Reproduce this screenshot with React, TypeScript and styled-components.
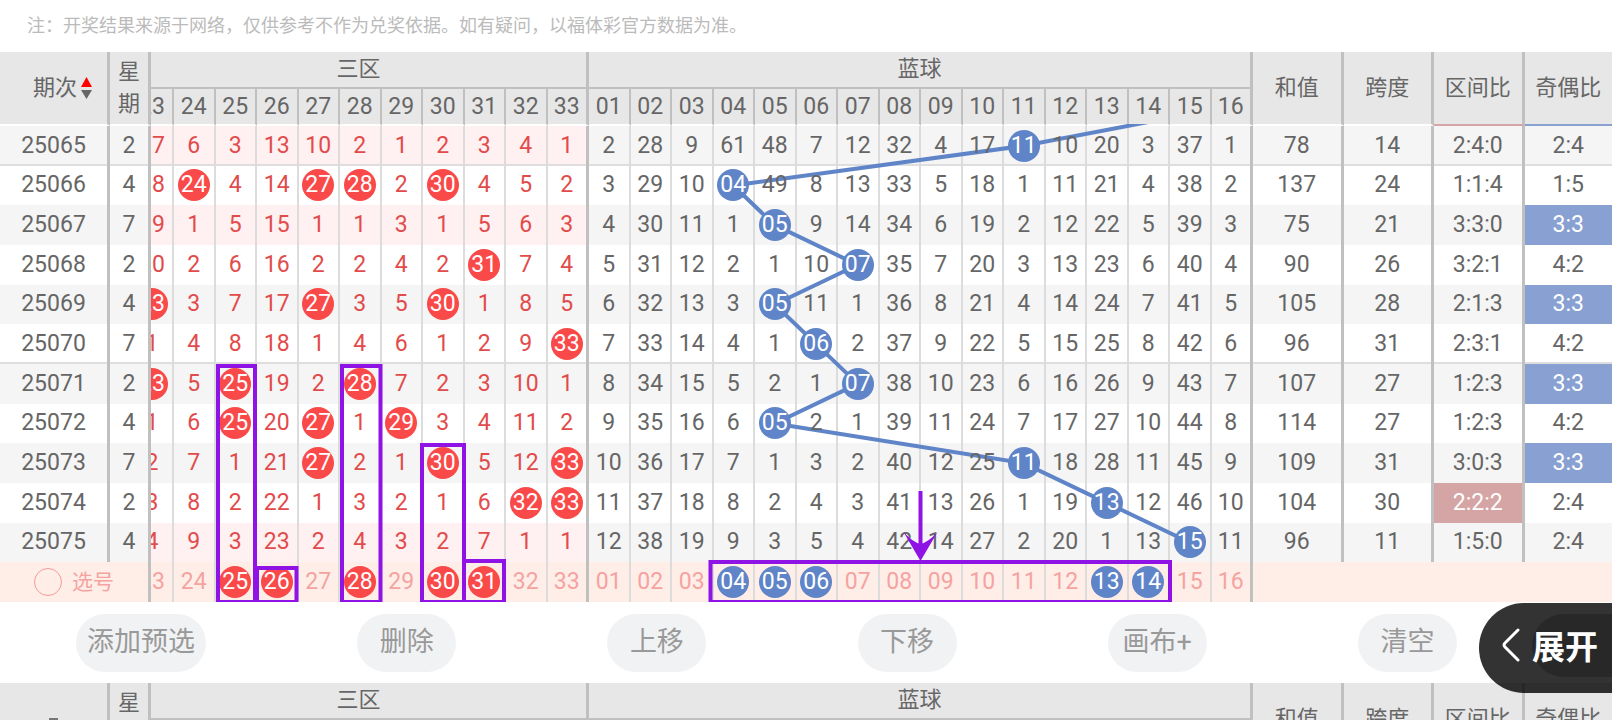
import React from 'react';
import styled, { createGlobalStyle, css } from 'styled-components';

const GlobalStyle = createGlobalStyle`
  * { box-sizing: border-box; }
  body {
    margin: 0;
    background: #fff;
    color: #666;
    font-family: Roboto, 'Noto Sans CJK SC', sans-serif;
  }
`;

/* Track widths shared by the table and the overlay drawing. */
const ISSUE = 220;
const WEEK = 82;
const CUT = 46;
const BALL = 83;
const STAT = 181;
const LAST = 175;
const RED_START = ISSUE + WEEK + CUT;
const BLUE_START = RED_START + BALL * 10;
const TOTAL = BLUE_START + BALL * 16 + STAT * 3 + LAST;
const BODY_HEIGHT = 476;
const STRIP = 2;

const tracks = css`
  display: grid;
  grid-template-columns:
    minmax(0, ${ISSUE}fr) minmax(0, ${WEEK}fr) minmax(0, ${CUT}fr)
    repeat(26, minmax(0, ${BALL}fr))
    repeat(3, minmax(0, ${STAT}fr)) minmax(0, ${LAST}fr);
`;

type Edge = 'thick' | 'thin' | 'none';
type Tone = 'plain' | 'grey' | 'pink' | 'select' | 'blue' | 'red';

const tones: Record<Tone, string> = {
  plain: '#fff',
  grey: '#f5f5f5',
  pink: '#fff0f1',
  select: '#ffeee8',
  blue: '#89a0d2',
  red: '#d5a4a4',
};

const Page = styled.main`
  height: 100vh;
  overflow: hidden;
`;

const Note = styled.p`
  margin: 0;
  padding: 0 27px;
  height: 52px;
  line-height: 52px;
  font-size: 18px;
  color: #bbb;
`;

const Chart = styled.section`
  position: relative;
  isolation: isolate;
`;

const Table = styled.table`
  display: block;
  width: 100%;
`;

const Head = styled.thead`
  ${tracks}
  grid-template-rows: 37px 37px;
`;

const HeadRow = styled.tr`
  display: contents;
`;

interface HeadCellProps {
  $from: number;
  $cols?: number;
  $row?: string;
  $edge?: Edge;
  $under?: string;
  $cut?: boolean;
}

const HeadCell = styled.th<HeadCellProps>`
  display: flex;
  align-items: center;
  justify-content: ${p => (p.$cut ? 'flex-end' : 'center')};
  overflow: hidden;
  padding: 0;
  grid-column: ${p => p.$from} / span ${p => p.$cols ?? 1};
  grid-row: ${p => p.$row ?? '1 / span 2'};
  background: #e7e7e7;
  background-clip: padding-box;
  font-size: 22px;
  font-weight: 400;
  line-height: 32px;
  white-space: nowrap;
  border: 0 solid #c0c0c0;
  border-right-width: ${p => (p.$edge === 'none' ? 0 : p.$edge === 'thin' ? 2 : 3)}px;
  border-bottom: 2px solid ${p => p.$under ?? '#fff'};
`;

const GroupLabel = styled.span<{ $shift?: boolean }>`
  padding: 0 ${p => (p.$shift ? 20 : 0)}px 2px 0;
`;

const Stacked = styled.span`
  width: 22px;
  white-space: normal;
`;

const SortButton = styled.button`
  display: flex;
  align-items: center;
  gap: 4px;
  padding: 0 0 0 18px;
  border: 0;
  background: none;
  color: inherit;
  font: inherit;
`;

const Body = styled.tbody`
  display: grid;
  grid-auto-rows: 1fr;
  height: ${BODY_HEIGHT}px;
`;

const Row = styled.tr`
  ${tracks}
`;

const Cell = styled.td<{ $tone: Tone; $edge?: Edge; $ruled?: boolean; $red?: boolean; $cut?: boolean; $cols?: number }>`
  display: flex;
  align-items: center;
  justify-content: ${p => (p.$cut ? 'flex-end' : 'center')};
  overflow: hidden;
  padding: 0;
  grid-column: span ${p => p.$cols ?? 1};
  background: ${p => tones[p.$tone]};
  color: ${p =>
    p.$tone === 'select' ? '#f4a3a1' : p.$tone === 'blue' || p.$tone === 'red' ? '#fff' : p.$red ? '#e24b4b' : '#666'};
  border: 0 solid ${p => (p.$edge === 'thin' ? '#dcdcdc' : '#c0c0c0')};
  border-right-width: ${p => (p.$edge === 'none' ? 0 : p.$edge === 'thin' ? 2 : 3)}px;
  box-shadow: ${p => (p.$ruled ? 'inset 0 -2px #dedede' : 'none')};
`;

const Value = styled.span<{ $ball?: 'red' | 'blue'; $cut?: boolean }>`
  position: relative;
  z-index: 1;
  flex: none;
  min-width: 32px;
  height: 32px;
  margin-right: ${p => (p.$cut ? 4 : 0)}px;
  border-radius: 16px;
  font-size: 23px;
  line-height: 31px;
  text-align: center;
  white-space: nowrap;
  ${p => p.$ball && css`
    color: #fff;
    background: ${p.$ball === 'red' ? '#fa4949' : '#5f85c8'};
  `}
`;

const PickLabel = styled.label`
  display: flex;
  align-items: center;
  gap: 10px;
  font-size: 21px;
  line-height: 32px;
`;

const PickRadio = styled.input`
  appearance: none;
  width: 28px;
  height: 28px;
  margin: 0;
  border: 1px solid #f49a98;
  border-radius: 50%;
`;

const Overlay = styled.svg<{ $above?: boolean }>`
  position: absolute;
  left: 0;
  bottom: 0;
  width: 100%;
  height: ${BODY_HEIGHT + STRIP}px;
  z-index: ${p => (p.$above ? 2 : 0)};
  pointer-events: none;
`;

const Toolbar = styled.div`
  display: flex;
  align-items: center;
  justify-content: space-between;
  height: 81px;
  padding: 0 155px 0 76px;
  background: #fff;
`;

const Pill = styled.button<{ $wide?: boolean }>`
  flex: none;
  width: ${p => (p.$wide ? 130 : 99)}px;
  height: 58px;
  padding: 0 0 2px;
  border: 0;
  border-radius: 29px;
  background: #f1f2f4;
  color: #999;
  font-family: inherit;
  font-size: 27px;
  line-height: 40px;
  white-space: nowrap;
`;

const Expand = styled.button`
  position: absolute;
  top: 603px;
  right: 0;
  z-index: 3;
  display: flex;
  align-items: center;
  gap: 12px;
  width: 133px;
  height: 90px;
  padding: 0 0 6px 23px;
  border: 0;
  border-radius: 45px 0 0 45px;
  background: rgba(0, 0, 0, 0.8);
  color: #fff;
  font-family: inherit;
  font-size: 33px;
  font-weight: 700;
  white-space: nowrap;
  overflow: hidden;
`;

const Shade = styled.span`
  position: absolute;
  top: 11px;
  left: 53px;
  right: 0;
  height: 63px;
  border-radius: 32px 0 0 32px;
  background: rgba(0, 0, 0, 0.2);
`;

const Chevron = styled.svg`
  position: relative;
  flex: none;
`;

const ExpandText = styled.span`
  position: relative;
`;

const reds = Array.from({ length: 10 }, (_, i) => String(24 + i));
const blues = Array.from({ length: 16 }, (_, i) => String(i + 1).padStart(2, '0'));

interface Draw {
  issue: string;
  week: number;
  red: string;
  blue: string;
  stats: [string, string, string, string];
  pink?: boolean;
}

/* Values that start with "*" are drawn numbers. */
const draws: Draw[] = [
  { issue: '25065', week: 2, red: '17 6 3 13 10 2 1 2 3 4 1', blue: '2 28 9 61 48 7 12 32 4 17 *11 10 20 3 37 1', stats: ['78', '14', '2:4:0', '2:4'], pink: true },
  { issue: '25066', week: 4, red: '18 *24 4 14 *27 *28 2 *30 4 5 2', blue: '3 29 10 *04 49 8 13 33 5 18 1 11 21 4 38 2', stats: ['137', '24', '1:1:4', '1:5'] },
  { issue: '25067', week: 7, red: '19 1 5 15 1 1 3 1 5 6 3', blue: '4 30 11 1 *05 9 14 34 6 19 2 12 22 5 39 3', stats: ['75', '21', '3:3:0', '3:3'], pink: true },
  { issue: '25068', week: 2, red: '20 2 6 16 2 2 4 2 *31 7 4', blue: '5 31 12 2 1 10 *07 35 7 20 3 13 23 6 40 4', stats: ['90', '26', '3:2:1', '4:2'] },
  { issue: '25069', week: 4, red: '*23 3 7 17 *27 3 5 *30 1 8 5', blue: '6 32 13 3 *05 11 1 36 8 21 4 14 24 7 41 5', stats: ['105', '28', '2:1:3', '3:3'] },
  { issue: '25070', week: 7, red: '1 4 8 18 1 4 6 1 2 9 *33', blue: '7 33 14 4 1 *06 2 37 9 22 5 15 25 8 42 6', stats: ['96', '31', '2:3:1', '4:2'] },
  { issue: '25071', week: 2, red: '*23 5 *25 19 2 *28 7 2 3 10 1', blue: '8 34 15 5 2 1 *07 38 10 23 6 16 26 9 43 7', stats: ['107', '27', '1:2:3', '3:3'] },
  { issue: '25072', week: 4, red: '1 6 *25 20 *27 1 *29 3 4 11 2', blue: '9 35 16 6 *05 2 1 39 11 24 7 17 27 10 44 8', stats: ['114', '27', '1:2:3', '4:2'] },
  { issue: '25073', week: 7, red: '2 7 1 21 *27 2 1 *30 5 12 *33', blue: '10 36 17 7 1 3 2 40 12 25 *11 18 28 11 45 9', stats: ['109', '31', '3:0:3', '3:3'] },
  { issue: '25074', week: 2, red: '3 8 2 22 1 3 2 1 6 *32 *33', blue: '11 37 18 8 2 4 3 41 13 26 1 19 *13 12 46 10', stats: ['104', '30', '2:2:2', '2:4'] },
  { issue: '25075', week: 4, red: '4 9 3 23 2 4 3 2 7 1 1', blue: '12 38 19 9 3 5 4 42 14 27 2 20 1 13 *15 11', stats: ['96', '11', '1:5:0', '2:4'], pink: true },
];

const pickRed = '23 24 *25 *26 27 *28 29 *30 *31 32 33';
const pickBlue = '01 02 03 *04 *05 *06 07 08 09 10 11 12 *13 *14 15 16';

const ruledIssues = ['25065', '25070'];

function NumberCells({ list, color, tone, ruled }: { list: string; color: 'red' | 'blue'; tone: Tone; ruled?: boolean }) {
  const items = list.split(' ');
  return (
    <>
      {items.map((item, i) => {
        const drawn = item.startsWith('*');
        const cut = color === 'red' && i === 0;
        return (
          <Cell key={i} $tone={tone} $ruled={ruled} $red={color === 'red'} $cut={cut} $edge={i === items.length - 1 ? 'thick' : 'thin'}>
            <Value $ball={drawn ? color : undefined} $cut={cut}>{item.replace('*', '')}</Value>
          </Cell>
        );
      })}
    </>
  );
}

function TableHead({ first, marked }: { first: React.ReactNode; marked?: boolean }) {
  return (
    <Head>
      <HeadRow>
        <HeadCell $from={1} rowSpan={2}>{first}</HeadCell>
        <HeadCell $from={2} rowSpan={2}><Stacked>星期</Stacked></HeadCell>
        <HeadCell $from={3} $cols={11} $row="1" $under="#c0c0c0" colSpan={11}><GroupLabel $shift>三区</GroupLabel></HeadCell>
        <HeadCell $from={14} $cols={16} $row="1" $under="#c0c0c0" colSpan={16}><GroupLabel>蓝球</GroupLabel></HeadCell>
        <HeadCell $from={30} rowSpan={2}>和值</HeadCell>
        <HeadCell $from={31} rowSpan={2}>跨度</HeadCell>
        <HeadCell $from={32} rowSpan={2} $under={marked ? '#d5a4a4' : undefined}>区间比</HeadCell>
        <HeadCell $from={33} rowSpan={2} $edge="none" $under={marked ? '#89a0d2' : undefined}>奇偶比</HeadCell>
      </HeadRow>
      <HeadRow>
        <HeadCell $from={3} $row="2" $edge="thin" $cut><Value $cut>23</Value></HeadCell>
        {reds.map((n, i) => (
          <HeadCell key={n} $from={4 + i} $row="2" $edge={n === '33' ? 'thick' : 'thin'}><Value>{n}</Value></HeadCell>
        ))}
        {blues.map((n, i) => (
          <HeadCell key={n} $from={14 + i} $row="2" $edge={n === '16' ? 'thick' : 'thin'}><Value>{n}</Value></HeadCell>
        ))}
      </HeadRow>
    </Head>
  );
}

const rowY = (r: number) => STRIP + ((r + 0.5) * BODY_HEIGHT) / 12;
const blueX = (n: number) => BLUE_START + BALL * (n - 0.5) - 2;
const trend = [16, 11, 4, 5, 7, 5, 6, 7, 5, 11, 13, 15];
const trendPoints = trend.map((n, i) => `${blueX(n)},${rowY(i - 1)}`).join(' ');

/* Marked areas: left, right, top. They all run down to the last row. */
const marks = [
  [436, 510, 242],
  [514, 593, 444],
  [684, 761, 242],
  [844, 928, 321],
  [928, 1008, 437],
  [1421, 2340, 438],
];

export default function App() {
  return (
    <Page>
      <GlobalStyle />
      <Note>注：开奖结果来源于网络，仅供参考不作为兑奖依据。如有疑问，以福体彩官方数据为准。</Note>
      <Chart>
        <Table>
          <TableHead
            marked
            first={
              <SortButton type="button">
                期次
                <svg width="11" height="22" viewBox="0 0 11 22" aria-hidden="true">
                  <path d="M5.5 0L11 10H0z" fill="#f00" />
                  <path d="M0 13H11L5.5 22z" fill="#666" />
                </svg>
              </SortButton>
            }
          />
          <Body>
            {draws.map((d, r) => {
              const base: Tone = r % 2 ? 'plain' : 'grey';
              const ruled = ruledIssues.includes(d.issue);
              return (
                <Row key={d.issue}>
                  <Cell $tone={base} $ruled={ruled}><Value>{d.issue}</Value></Cell>
                  <Cell $tone={base} $ruled={ruled}><Value>{d.week}</Value></Cell>
                  <NumberCells list={d.red} color="red" tone={d.pink ? 'pink' : base} ruled={ruled} />
                  <NumberCells list={d.blue} color="blue" tone={base} ruled={ruled} />
                  {d.stats.map((s, i) => (
                    <Cell
                      key={i}
                      $tone={s === '3:3' ? 'blue' : s === '2:2:2' ? 'red' : base}
                      $ruled={ruled}
                      $edge={i === 3 ? 'none' : 'thick'}
                    >
                      <Value>{s}</Value>
                    </Cell>
                  ))}
                </Row>
              );
            })}
            <Row>
              <Cell $tone="select" $cols={2} colSpan={2}>
                <PickLabel>
                  <PickRadio type="radio" name="pick" />
                  选号
                </PickLabel>
              </Cell>
              <NumberCells list={pickRed} color="red" tone="select" />
              <NumberCells list={pickBlue} color="blue" tone="select" />
              <Cell $tone="select" $cols={4} $edge="none" colSpan={4} />
            </Row>
          </Body>
        </Table>
        <Overlay viewBox={`0 0 ${TOTAL} ${BODY_HEIGHT + STRIP}`} preserveAspectRatio="none" aria-hidden="true">
          <polyline points={trendPoints} fill="none" stroke="#5f85c8" strokeWidth="4" vectorEffect="non-scaling-stroke" />
        </Overlay>
        <Overlay $above viewBox={`0 0 ${TOTAL} ${BODY_HEIGHT + STRIP}`} preserveAspectRatio="none" aria-hidden="true">
          {marks.map(([l, r, t]) => (
            <rect key={l} x={l} y={t} width={r - l} height={478 - t} fill="none" stroke="#9013e6" strokeWidth="4" vectorEffect="non-scaling-stroke" />
          ))}
          <path d="M1841 367V428" stroke="#9013e6" strokeWidth="4" vectorEffect="non-scaling-stroke" />
          <path d="M1807 408Q1825 418 1841 420Q1857 418 1875 408L1841 437z" fill="#9013e6" />
        </Overlay>
      </Chart>
      <Toolbar>
        <Pill type="button" $wide>添加预选</Pill>
        <Pill type="button">删除</Pill>
        <Pill type="button">上移</Pill>
        <Pill type="button">下移</Pill>
        <Pill type="button">画布+</Pill>
        <Pill type="button">清空</Pill>
      </Toolbar>
      <Table>
        <TableHead
          first={
            <svg width="9" height="2" viewBox="0 0 9 2" aria-hidden="true">
              <path d="M0 1H9" stroke="#777" strokeWidth="2" />
            </svg>
          }
        />
      </Table>
      <Expand type="button">
        <Shade />
        <Chevron width="18" height="34" viewBox="0 0 18 34" fill="none" stroke="#fff" strokeWidth="3" strokeLinecap="round" aria-hidden="true">
          <path d="M16 2L3 15Q1 17 3 19L16 32" />
        </Chevron>
        <ExpandText>展开</ExpandText>
      </Expand>
    </Page>
  );
}
